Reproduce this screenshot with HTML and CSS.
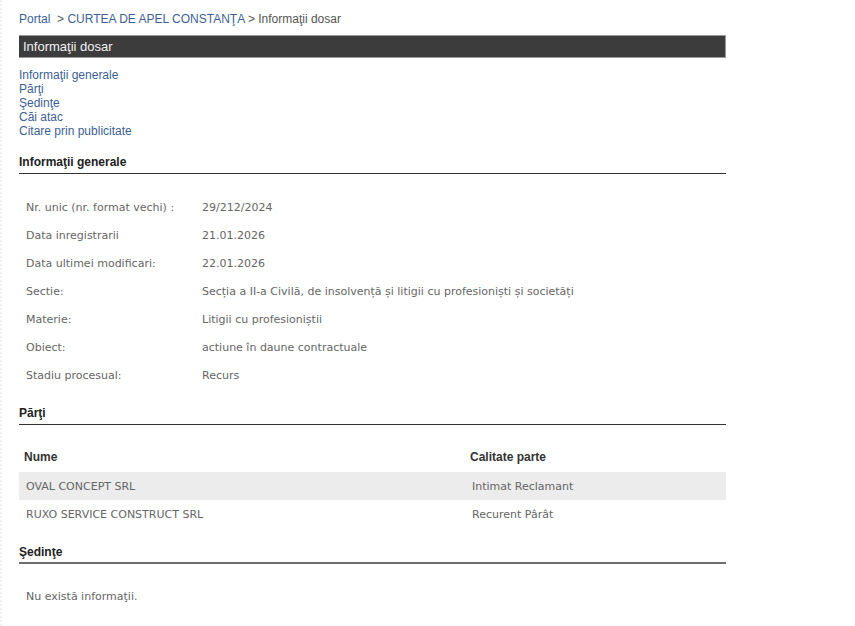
FILE: index.html
```html
<!DOCTYPE html>
<html lang="ro">
<head>
<meta charset="utf-8">
<title>Informaţii dosar</title>
<link rel="stylesheet" href="styles.css">
</head>
<body>
<div class="page">
  <div class="crumbs"><a href="#">Portal</a>&nbsp; &gt; <a href="#">CURTEA DE APEL CONSTANŢA</a> &gt; <span>Informaţii dosar</span></div>
  <div class="titlebar">Informaţii dosar</div>
  <ul class="toc">
    <li><a href="#">Informaţii generale</a></li>
    <li><a href="#">Părţi</a></li>
    <li><a href="#">Şedinţe</a></li>
    <li><a href="#">Căi atac</a></li>
    <li><a href="#">Citare prin publicitate</a></li>
  </ul>

  <h2 class="sect">Informaţii generale</h2>
  <table class="info">
    <tr><td class="lbl">Nr. unic (nr. format vechi) :</td><td>29/212/2024</td></tr>
    <tr><td class="lbl">Data inregistrarii</td><td>21.01.2026</td></tr>
    <tr><td class="lbl">Data ultimei modificari:</td><td>22.01.2026</td></tr>
    <tr><td class="lbl">Sectie:</td><td>Secția a II-a Civilă, de insolvență și litigii cu profesioniști și societăți</td></tr>
    <tr><td class="lbl">Materie:</td><td>Litigii cu profesioniștii</td></tr>
    <tr><td class="lbl">Obiect:</td><td>actiune în daune contractuale</td></tr>
    <tr><td class="lbl">Stadiu procesual:</td><td>Recurs</td></tr>
  </table>

  <h2 class="sect">Părţi</h2>
  <table class="parti">
    <tr class="head"><th class="name">Nume</th><th>Calitate parte</th></tr>
    <tr class="alt"><td class="name">OVAL CONCEPT SRL</td><td>Intimat Reclamant</td></tr>
    <tr><td class="name">RUXO SERVICE CONSTRUCT SRL</td><td>Recurent Pârât</td></tr>
  </table>

  <h2 class="sect sect-gray">Şedinţe</h2>
  <p class="empty">Nu există informaţii.</p>
</div>
</body>
</html>
```

FILE: styles.css
```css
html, body {
  margin: 0;
  padding: 0;
  background: #fff;
}
body {
  font-family: "Liberation Sans", Arial, sans-serif;
  font-size: 12px;
  color: #333;
  border-left: 2px dotted #efefef;
  min-height: 626px;
  box-sizing: border-box;
}
.page {
  width: 707px;
  margin-left: 17px;
  padding-top: 12px;
}
a {
  color: #3e5f95;
  text-decoration: none;
}
.crumbs {
  line-height: 14px;
  color: #555;
}
.crumbs span { color: #555; }
.titlebar {
  margin-top: 9px;
  height: 21px;
  line-height: 21px;
  background: #3c3c3c;
  border: 1px solid #9a9a9a;
  border-left: none;
  color: #f2f2f2;
  font-size: 13px;
  padding-left: 4px;
}
.toc {
  list-style: none;
  margin: 10px 0 0;
  padding: 0;
  line-height: 14px;
}
.sect {
  margin: 17px 0 0;
  font-size: 12px;
  font-weight: bold;
  line-height: 14px;
  color: #222;
  padding-bottom: 4px;
  border-bottom: 1px solid #333;
}
.sect-gray {
  border-bottom: 2px solid #6e6e6e;
  padding-bottom: 3px;
}
table {
  border-collapse: collapse;
  table-layout: fixed;
  width: 100%;
  font-family: "DejaVu Sans", Verdana, sans-serif;
  font-size: 11px;
  color: #666;
}
td, th {
  padding: 0 0 0 7px;
  text-align: left;
  vertical-align: middle;
}
.info {
  margin-top: 19px;
  margin-bottom: 14px;
}
.info tr { height: 28px; }
.info .lbl { width: 169px; }
.parti {
  margin-top: 17px;
  margin-bottom: 15px;
}
.parti tr { height: 28px; }
.parti tr.head { height: 30px; }
.parti th {
  color: #333;
  font-family: "Liberation Sans", Arial, sans-serif;
  font-weight: bold;
  padding-left: 5px;
  font-size: 12px;
}
.parti th.name { width: 441px; }
.parti tr.alt { background: #ececec; }
.empty {
  margin: 19px 0 0;
  padding-left: 7px;
  height: 28px;
  line-height: 28px;
  font-family: "DejaVu Sans", Verdana, sans-serif;
  font-size: 11px;
  color: #666;
}
```
